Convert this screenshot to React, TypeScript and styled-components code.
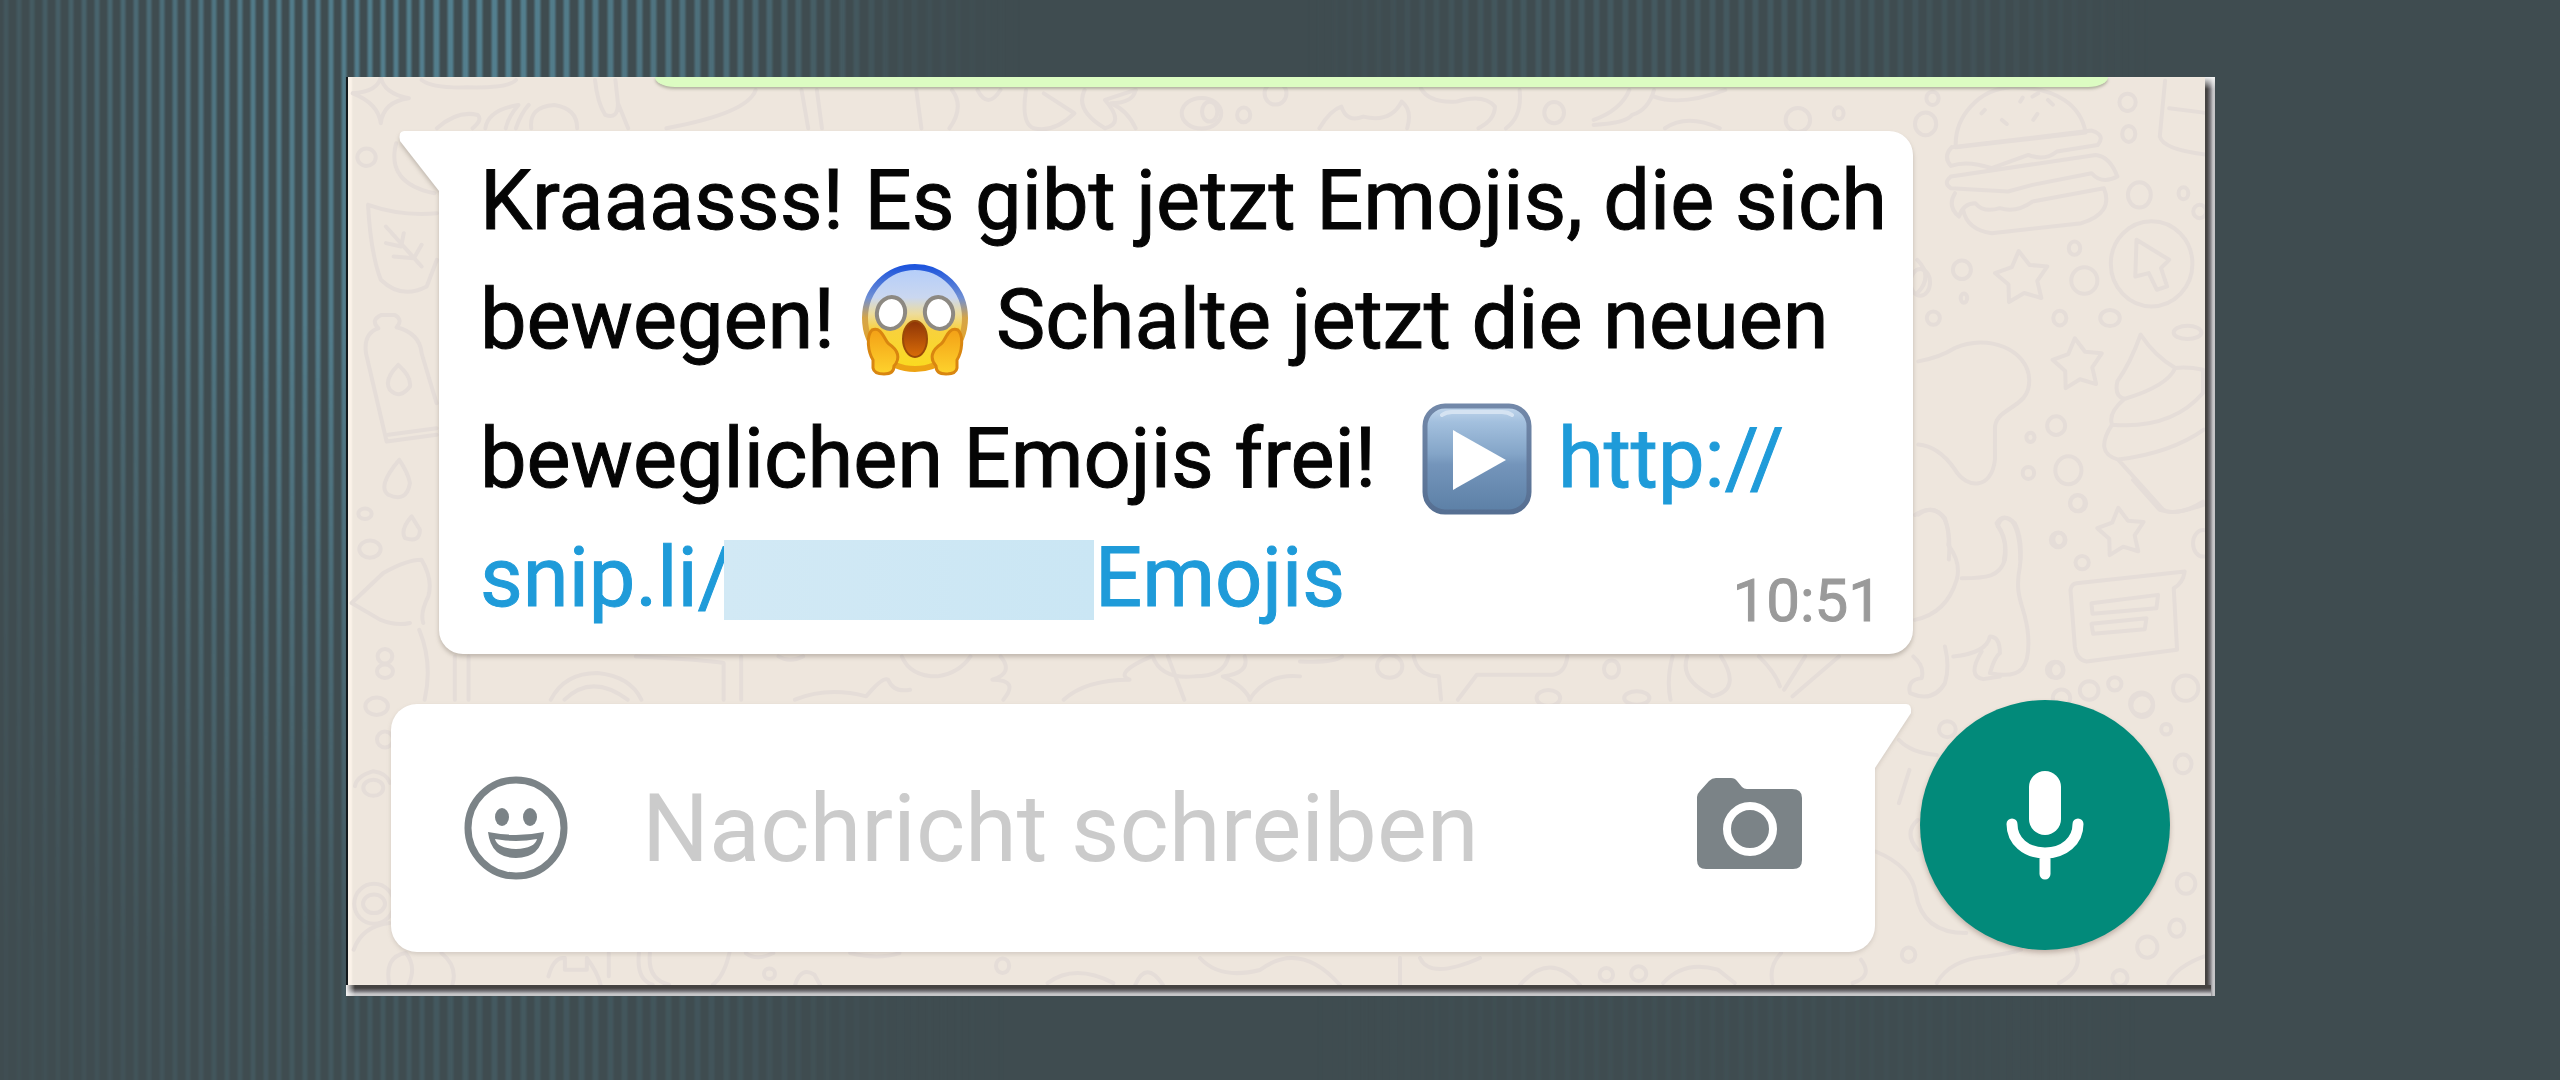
import React from "react";
import styled, { createGlobalStyle } from "styled-components";

const GlobalStyle = createGlobalStyle`
  *, *::before, *::after { box-sizing: border-box; }
  body {
    margin: 0;
    background: #3f4c50;
    font-family: Roboto, "Liberation Sans", sans-serif;
  }
`;

const Page = styled.main`
  position: relative;
  min-height: 100vh;
  padding: 77px 345px 84px 346px;

  &::before {
    content: "";
    position: absolute;
    inset: 0;
    background:
      repeating-linear-gradient(to right, transparent 0 2px, #54808f 5px 7px, transparent 10px 13px) 0 0 / 429px 100% no-repeat,
      repeating-linear-gradient(
        to right,
        transparent 0 3px, #54808f 6px 9px, transparent 12px 17px,
        #54808f 20px 23px, transparent 26px 29px
      ) 429px 0 no-repeat;
    mask-image:
      linear-gradient(
        to right,
        rgba(0, 0, 0, 0.2), rgba(0, 0, 0, 0.9) 10%, #000 20%, rgba(0, 0, 0, 0.65) 28%,
        rgba(0, 0, 0, 0.1) 35%, transparent 40%, transparent 51%,
        rgba(0, 0, 0, 0.25) 60%, rgba(0, 0, 0, 0.25) 70%, transparent 84%
      ),
      linear-gradient(to bottom, #000 30%, rgba(0, 0, 0, 0.25) 88%);
    mask-composite: intersect;
  }
`;

const Frame = styled.div`
  position: relative;
  padding: 0 10px 11px 2px;
  background:
    linear-gradient(to right, #f4f4f4, rgba(244, 244, 244, 0) 9px) left bottom / 9px 11px no-repeat,
    linear-gradient(to bottom, #f4f4f4, rgba(244, 244, 244, 0) 12px) right top / 10px 12px no-repeat,
    linear-gradient(to bottom, #454341 0 3px, #77757a 6px, #c6c6c8 9px) left bottom / calc(100% - 4px) 11px no-repeat,
    linear-gradient(to right, #454341 0 2px, #77757a 5px, #c6c6c8 8px) right top / 10px 100% no-repeat,
    #14191b;
`;

const Chat = styled.section`
  position: relative;
  overflow: hidden;
  padding-bottom: 33px;
  background: #eee6dd;
  box-shadow: inset 4px 0 2px #fbf3e9;
`;

const Wallpaper = styled.svg`
  position: absolute;
  inset: 0;
  width: 100%;
  height: 100%;
  fill: none;
  stroke: #e5ddd8;
  stroke-width: 4px;
  stroke-linecap: round;
  stroke-linejoin: round;

  * { vector-effect: non-scaling-stroke; }
`;

const OwnMessage = styled.div`
  position: relative;
  height: 10px;
  margin: 0 97px 0 307px;
  border-radius: 0 0 20px 20px / 0 0 10px 10px;
  background: #dcfcc2;
  box-shadow: 0 2px 3px rgba(70, 80, 50, 0.35);
`;

const Message = styled.article`
  position: relative;
  margin: 44px 292px 0 91px;
  padding: 10px 31px 17px 41px;
  border-radius: 0 24px 24px 24px;
  background: #fff;
  filter: drop-shadow(0 3px 2px rgba(90, 80, 70, 0.3));

  &::before {
    content: "";
    position: absolute;
    top: 0;
    left: -40px;
    width: 42px;
    height: 60px;
    background: #fff;
    clip-path: path("M5 0H42V60H40L1 10Q-1 0 5 0Z");
  }
`;

const Line = styled.div<{ $spaced?: boolean }>`
  display: flex;
  justify-content: space-between;
  align-items: flex-end;
  margin-top: ${(p) => (p.$spaced ? 20 : 0)}px;
  font-size: 83px;
  line-height: 119px;
  white-space: pre;
  color: #050505;
  -webkit-text-stroke: 1px currentColor;
`;

const Emoji = styled.svg`
  width: 110px;
  height: 112px;
  margin: 0 5px;
  vertical-align: -28px;
`;

const Link = styled.a`
  color: #1f9bd9;
  text-decoration: none;
`;

const Redacted = styled.span`
  position: relative;
  display: inline-block;
  width: 370px;
  height: 80px;
  margin: 0 1px 0 -8px;
  vertical-align: -14px;
  background: linear-gradient(to right, #d2e9f5, #cae6f4);
`;

const Time = styled.time`
  font-size: 60px;
  line-height: 72px;
  color: #9a9a9a;
`;

const Composer = styled.form`
  position: relative;
  display: flex;
  align-items: flex-start;
  gap: 45px;
  margin-top: 46px;
  padding: 0 35px 0 43px;
`;

const Field = styled.div`
  position: relative;
  flex: 1;
  min-width: 0;
  display: flex;
  align-items: center;
  gap: 74px;
  height: 248px;
  margin-top: 4px;
  padding: 0 73px 0 73px;
  border-radius: 26px 0 26px 26px;
  background: #fff;
  filter: drop-shadow(0 2px 2px rgba(90, 80, 70, 0.18));

  &::after {
    content: "";
    position: absolute;
    top: 0;
    right: -37px;
    width: 39px;
    height: 64px;
    background: #fff;
    clip-path: path("M0 0H33Q39 0 38 9L2 64H0Z");
  }
`;

const IconButton = styled.button`
  flex: none;
  display: flex;
  padding: 0;
  border: 0;
  background: none;
  color: #7b8387;
`;

const MessageInput = styled.input`
  flex: 1;
  min-width: 0;
  height: 130px;
  padding: 2px 0 0;
  border: 0;
  outline: 0;
  background: none;
  font: 94px Roboto, "Liberation Sans", sans-serif;
  color: #050505;

  &::placeholder { color: #cbcbcb; opacity: 1; }
`;

const MicButton = styled(IconButton)`
  align-items: center;
  justify-content: center;
  width: 250px;
  height: 250px;
  border-radius: 50%;
  background: #028a7a;
  color: #fff;
  box-shadow: 0 3px 5px rgba(90, 60, 50, 0.3);
`;

const star = (x: number, y: number, rx: number, ry: number) => {
  const points = Array.from({ length: 10 }, (_, i) => {
    const a = (i * Math.PI) / 5 - 1.7;
    const k = i % 2 ? 0.55 : 1;
    return `${x + Math.cos(a) * rx * k},${y + Math.sin(a) * ry * k}`;
  });
  return <polygon key={`${x}-${y}`} points={points.join(" ")} />;
};

const Dots = ({ items }: { items: number[][] }) => (
  <>
    {items.map(([x, y, rx, ry]) => (
      <ellipse key={`${x}-${y}-${rx}`} cx={x} cy={y} rx={rx} ry={ry} />
    ))}
  </>
);

const Doodles = () => (
  <Wallpaper viewBox="348 77 1857 908" preserveAspectRatio="xMidYMid slice" aria-hidden="true">
    {/* right column: burger, stars, compass, ice cream */}
    <g transform="translate(1600 60) scale(.408 .333)">
      <path d="M872 262C868 170 930 85 1010 82C1120 80 1180 140 1190 218L872 262Z" />
      <path d="M862 262L1205 212Q1240 225 1220 255L1120 275Q1090 305 1050 285L960 325Q900 300 860 318Q840 290 862 262" />
      <path d="M860 350L1215 285Q1250 290 1268 350Q1230 375 1205 340L1060 375L1000 395L860 385Q840 370 860 350" />
      <path d="M870 400Q850 440 880 470Q890 430 920 430Q940 460 980 445Q1020 460 1060 425L1235 385Q1260 460 1180 490L960 520Q900 510 890 450" />
      <path d="M935 160l8-10M985 180l12 12M1030 125l6-12M1062 180l10-18M1098 120l12 14M1060 110l14-10" />
      {star(1035, 655, 68, 82)}
      {star(1172, 915, 64, 80)}
      {star(1278, 1420, 60, 76)}
      <ellipse cx="1352" cy="612" rx="100" ry="128" />
      <path d="M1315 540L1395 600L1375 625L1390 680L1365 690L1345 640L1312 650Z" />
      <path d="M1385 62L1372 230Q1380 270 1490 285M1395 145L1480 158" />
      <path d="M780 905Q830 895 870 865C950 820 1050 870 1052 960C1055 1050 965 1040 968 1110V1200C960 1290 900 1290 870 1230Q830 1160 780 1155" />
      <path d="M1325 825Q1300 910 1268 965Q1260 1010 1285 1018Q1390 980 1410 925Q1360 890 1325 825M1285 1018Q1245 1060 1255 1095Q1400 1110 1478 1000V930Q1440 920 1410 925M1255 1095Q1210 1180 1270 1200Q1400 1180 1480 1110M1270 1200L1380 1350Q1400 1370 1480 1335" />
      <path d="M780 1365Q820 1330 845 1380Q860 1420 855 1500M975 1400Q985 1360 1010 1385Q1030 1420 1030 1500M975 1400Q1000 1440 990 1500" />
      <Dots
        items={[
          [485, 180, 30, 36], [585, 160, 12, 18], [798, 192, 26, 34], [815, 115, 15, 20],
          [1293, 127, 20, 26], [1296, 222, 16, 24], [1322, 405, 28, 38], [1430, 400, 12, 18],
          [1470, 455, 16, 20], [887, 630, 22, 28], [785, 668, 24, 40], [817, 775, 16, 20],
          [892, 715, 8, 14], [1163, 565, 14, 20], [1187, 662, 32, 40], [1127, 775, 16, 22],
          [1118, 1098, 22, 28], [1055, 1133, 10, 14], [1148, 1232, 32, 42], [1050, 1240, 14, 18],
          [1170, 1330, 18, 24], [1125, 1440, 14, 20], [1440, 818, 34, 20], [1250, 775, 24, 24],
        ]}
      />
    </g>
    {/* cat, note */}
    <g transform="translate(1900 480) scale(.333)">
      <path d="M45 105Q100 70 135 115Q150 160 145 195Q185 250 170 300Q140 400 45 420M185 295C260 295 300 290 315 240Q325 180 290 130Q310 95 345 130Q370 180 360 260C340 360 380 380 385 470C390 560 370 600 270 580Q285 530 300 520Q300 470 270 470Q260 520 160 530M245 515Q200 590 250 598L300 590M135 500Q150 560 135 610Q100 670 30 640Q20 600 65 595Q75 560 40 530" />
      <path d="M530 310L855 275Q850 310 822 325L832 510L560 545Q530 540 525 500L512 330Q515 312 530 310M575 370L775 345L770 385L578 402ZM575 432L740 415L735 448L580 462Z" />
      <path d="M700 0L780 90Q840 110 910 65" />
      <Dots
        items={[
          [535, 70, 24, 24], [475, 180, 22, 22], [547, 248, 20, 20], [465, 570, 24, 24],
          [568, 632, 28, 28], [645, 612, 20, 20], [858, 625, 38, 38], [725, 672, 34, 34],
          [910, 190, 30, 40], [485, 655, 26, 26],
        ]}
      />
    </g>
    {/* top left */}
    <g transform="translate(340 60) scale(.51 .333)">
      <path d="M25 100Q75 95 80 50Q85 100 135 115Q85 125 80 190Q75 130 25 100M160 60Q180 85 250 82Q330 85 345 60M500 60Q505 130 520 165Q545 180 545 130L540 60M545 130L565 205M815 90Q800 160 640 205M905 90L918 205M935 90L945 205M1130 90L1140 205M1200 90Q1225 140 1195 205" />
      <path d="M190 205Q230 150 270 165Q280 180 260 205M285 205Q290 150 350 135Q330 170 325 205M345 205Q355 160 370 135M375 205Q370 140 420 135Q465 145 465 205M1250 90Q1270 150 1295 90M1345 90Q1335 190 1360 205Q1400 220 1440 160L1380 100M1460 90Q1440 150 1500 205Q1540 190 1500 120L1560 90" />
      <path d="M55 435Q120 470 190 460M55 435Q60 580 80 660Q120 720 170 680L190 600M90 500L160 620M125 520L120 560L90 550M160 555L145 595L105 590" />
      <Dots items={[[52, 292, 18, 26]]} />
      <path d="M110 250Q90 370 185 400" />
    </g>
    <g transform="translate(1100 60) scale(.5485 .333)">
      <path d="M65 90Q60 130 20 130Q50 150 65 205M400 205Q420 150 440 140Q450 190 480 170Q530 190 550 125Q570 150 560 205M585 85Q600 130 650 125Q700 100 720 140Q720 180 690 205M765 90Q770 170 740 205M1010 90Q1000 150 970 165Q960 190 900 195M965 90Q950 150 900 180M1010 110Q1060 140 1140 90M1030 205Q1070 160 1130 205M1490 600Q1520 650 1490 700" />
      <Dots
        items={[
          [185, 160, 36, 46], [200, 155, 14, 30], [262, 165, 12, 22], [320, 100, 20, 34],
          [828, 158, 18, 32],
        ]}
      />
    </g>
    {/* left column */}
    <g transform="translate(340 270) scale(.333)">
      <path d="M115 175Q90 150 125 135L165 135Q190 150 170 172M115 175Q70 190 78 250L140 515L290 495M170 172Q240 190 245 250L290 400M145 495L290 475M175 285Q130 330 150 360Q180 390 210 350Q215 320 175 285M178 570Q110 650 145 675Q200 700 210 640Q205 610 178 570M35 1000L130 910Q200 870 245 870Q280 930 265 980Q240 1030 250 1060M35 1000L120 1050Q170 1070 210 1060M215 740Q180 780 195 805Q240 820 240 780ZM45 1550Q50 1520 100 1505Q140 1510 150 1540" />
      <Dots
        items={[
          [75, 732, 20, 16], [90, 838, 32, 26], [135, 1160, 22, 22], [135, 1205, 24, 20],
          [110, 1310, 34, 26], [135, 1410, 24, 24], [100, 1555, 30, 24],
        ]}
      />
    </g>
    {/* strip between the message and the composer */}
    <g transform="translate(400 380) scale(.5485 .333)">
      <path d="M100 830V960M125 830V960M430 830Q560 840 590 850V960M622 830V960M275 960Q300 880 360 880Q420 890 440 960M300 960Q350 880 415 960M690 830Q710 850 735 830M915 830Q930 890 980 890Q1020 880 1040 830M1095 830Q1120 880 1080 900Q1130 900 1100 960M1370 830Q1300 880 1330 900Q1250 900 1210 960M1400 830L1430 960M1540 830Q1550 880 1500 890Q1540 920 1550 960M720 960Q780 920 850 950Q880 890 890 900Q900 940 930 930M35 750Q60 850 45 960" />
    </g>
    <g transform="translate(1300 380) scale(.421 .333)">
      <path d="M-350 830Q-330 900 -250 890Q-180 890 -170 830M-120 960Q-80 880 0 890M0 845Q80 850 100 830M270 830Q280 890 330 890L335 960M375 960L420 885H600Q630 880 635 830M885 830Q870 900 880 960M920 830Q900 900 980 950Q1050 930 1000 830M1090 830Q1130 880 1140 920M1200 830L1150 930M1280 830L1170 950" />
      <Dots items={[[213, 860, 30, 34], [740, 868, 18, 26], [800, 955, 30, 20], [590, 955, 28, 24]]} />
    </g>
    {/* bottom edge */}
    <g transform="translate(340 680) scale(.5485 .333)">
      <path d="M25 810Q40 740 90 730M90 915Q80 830 120 820Q140 860 125 915M185 820Q215 860 205 915M380 890Q390 830 410 835V870H450V835Q470 880 475 915M490 820V890M565 820Q560 900 600 915M710 820Q700 890 680 915M545 820Q540 900 570 915M740 820Q760 845 790 820M930 820Q980 840 1020 820M830 915Q840 860 865 885L875 915M1290 910Q1340 850 1410 910M1450 915Q1470 840 1500 915" />
      <Dots items={[[62, 672, 20, 28], [783, 882, 10, 16], [1208, 858, 12, 22], [62, 672, 36, 60]]} />
    </g>
    <g transform="translate(1900 940)">
      <path d="M-700 18Q-680 40 -640 30Q-600 0 -560 45M-500 18V45M-480 18Q-470 40 -420 18M-380 45Q-350 10 -320 45" />
    </g>
    <g transform="translate(1600 660) scale(.421 .333)">
      <path d="M150 970Q200 900 280 930L320 970M430 880Q400 920 410 970M620 900Q650 950 600 970M710 240Q740 280 800 285M655 575Q740 620 750 700C760 780 800 820 870 820M800 970Q830 900 920 890Q980 880 1000 870M1130 870Q1150 930 1090 970M1350 970Q1370 920 1435 890M735 330L710 430M755 480Q720 520 755 570" />
      <Dots
        items={[
          [825, 208, 20, 24], [1085, 30, 16, 24], [1288, 137, 26, 34], [1345, 208, 12, 16],
          [1385, 312, 20, 28], [1392, 672, 22, 30], [1370, 805, 18, 26], [1300, 862, 24, 32],
          [733, 885, 16, 22], [15, 945, 16, 20], [92, 942, 18, 22], [1235, 955, 18, 24],
        ]}
      />
    </g>
  </Wallpaper>
);

const ScreamEmoji = () => (
  <Emoji viewBox="0 0 110 112" role="img" aria-label="schreiendes Gesicht">
    <defs>
      <linearGradient id="face" x2="0" y2="1">
        <stop offset="0" stopColor="#b3cdfa" />
        <stop offset=".3" stopColor="#cad7f0" />
        <stop offset=".46" stopColor="#eddc9c" />
        <stop offset=".62" stopColor="#f8d13d" />
        <stop offset="1" stopColor="#fadb1e" />
      </linearGradient>
      <linearGradient id="rim" x2="0" y2="1">
        <stop offset="0" stopColor="#1f56dd" />
        <stop offset=".3" stopColor="#6f8fd4" />
        <stop offset=".5" stopColor="#d5a548" />
        <stop offset="1" stopColor="#eda313" />
      </linearGradient>
      <linearGradient id="mouth" x2="0" y2="1">
        <stop offset="0" stopColor="#8d3407" />
        <stop offset="1" stopColor="#d96c08" />
      </linearGradient>
      <linearGradient id="hand" x2="0" y2="1">
        <stop offset="0" stopColor="#f3a016" />
        <stop offset="1" stopColor="#fed32d" />
      </linearGradient>
    </defs>
    <ellipse cx="55" cy="54" rx="50" ry="51" fill="url(#face)" stroke="url(#rim)" strokeWidth="6" />
    <g fill="#fff" stroke="#8d8982" strokeWidth="4">
      <ellipse cx="31" cy="49" rx="14" ry="16" transform="rotate(14 31 49)" />
      <ellipse cx="79" cy="49" rx="14" ry="16" transform="rotate(-14 79 49)" />
    </g>
    <ellipse cx="55" cy="75" rx="12" ry="18" fill="url(#mouth)" stroke="#9a4a08" strokeWidth="2" />
    <g fill="url(#hand)" stroke="#d98610" strokeWidth="3">
      <path d="M12 66C6 72 8 88 13 96V104Q14 110 24 110Q34 110 34 102C41 94 38 86 29 80C24 76 22 62 12 66Z" />
      <path d="M98 66C104 72 102 88 97 96V104Q96 110 86 110Q76 110 76 102C69 94 72 86 81 80C86 76 88 62 98 66Z" />
    </g>
  </Emoji>
);

const PlayEmoji = () => (
  <Emoji viewBox="0 0 110 112" role="img" aria-label="Wiedergabe">
    <defs>
      <linearGradient id="key" x2="0" y2="1">
        <stop offset="0" stopColor="#c3d8ed" />
        <stop offset=".15" stopColor="#a3c0de" />
        <stop offset=".45" stopColor="#84a5c8" />
        <stop offset=".55" stopColor="#7495bb" />
        <stop offset="1" stopColor="#5c80a6" />
      </linearGradient>
      <linearGradient id="keyRim" x2="0" y2="1">
        <stop offset="0" stopColor="#7288a9" />
        <stop offset="1" stopColor="#566f92" />
      </linearGradient>
    </defs>
    <rect x="3" y="3" width="104" height="106" rx="20" fill="url(#key)" stroke="url(#keyRim)" strokeWidth="5" />
    <path d="M20 12Q24 9 30 9H80Q86 9 90 12" fill="none" stroke="#d5e3f2" strokeWidth="4" strokeLinecap="round" />
    <path d="M31 27L84 57L31 87Z" fill="#fff" />
  </Emoji>
);

const SmileyIcon = () => (
  <svg width="104" height="104" viewBox="0 0 104 104" aria-hidden="true">
    <circle cx="52" cy="52" r="48" fill="none" stroke="currentColor" strokeWidth="7" />
    <ellipse cx="38" cy="41" rx="7" ry="9" fill="currentColor" />
    <ellipse cx="66" cy="41" rx="7" ry="9" fill="currentColor" />
    <path d="M24 56Q52 62 80 56Q77 82 52 82Q27 82 24 56Z" fill="currentColor" />
    <path d="M31 63Q52 67 73 63Q71 72 52 73Q33 72 31 63Z" fill="#fff" />
  </svg>
);

const CameraIcon = () => (
  <svg width="105" height="104" viewBox="0 0 105 104" aria-hidden="true">
    <path
      d="M0 93V21Q0 18 3 15L12 5Q15 2 19 2H34Q38 2 40 5L45 11Q47 13 50 13H95Q105 13 105 22V84Q105 93 96 93H9Q0 93 0 84Z"
      fill="currentColor"
    />
    <circle cx="53" cy="53" r="23" fill="none" stroke="#fff" strokeWidth="8" />
  </svg>
);

const MicIcon = () => (
  <svg width="80" height="110" viewBox="0 0 80 110" aria-hidden="true">
    <rect x="24" y="1" width="32" height="64" rx="16" fill="currentColor" />
    <path d="M7 54C7 71 21 83 40 83S73 71 73 54M40 83V104" fill="none" stroke="currentColor" strokeWidth="11" strokeLinecap="round" />
  </svg>
);

export default function App() {
  return (
    <>
      <GlobalStyle />
      <Page>
        <Frame>
          <Chat>
            <Doodles />
            <OwnMessage />
            <Message>
              <Line>Kraaasss! Es gibt jetzt Emojis, die sich</Line>
              <Line>
                <span>
                  {"bewegen! "}
                  <ScreamEmoji />
                  {" Schalte jetzt die neuen"}
                </span>
              </Line>
              <Line $spaced>
                <span>
                  {"beweglichen Emojis frei!  "}
                  <PlayEmoji />{" "}
                  <Link href="#link">http://</Link>
                </span>
              </Line>
              <Line>
                <Link href="#link">
                  snip.li/
                  <Redacted />
                  Emojis
                </Link>
                <Time>10:51</Time>
              </Line>
            </Message>
            <Composer onSubmit={(e: React.FormEvent) => e.preventDefault()}>
              <Field>
                <IconButton type="button" aria-label="Emoji">
                  <SmileyIcon />
                </IconButton>
                <MessageInput type="text" aria-label="Nachricht" placeholder="Nachricht schreiben" />
                <IconButton type="button" aria-label="Kamera">
                  <CameraIcon />
                </IconButton>
              </Field>
              <MicButton type="button" aria-label="Sprachnachricht">
                <MicIcon />
              </MicButton>
            </Composer>
          </Chat>
        </Frame>
      </Page>
    </>
  );
}
